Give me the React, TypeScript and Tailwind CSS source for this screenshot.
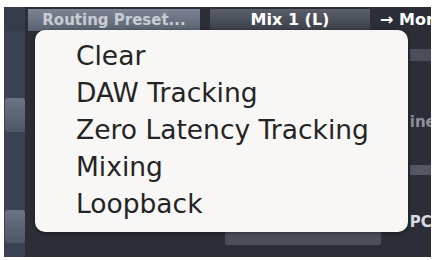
const ITEMS = ['Clear', 'DAW Tracking', 'Zero Latency Tracking', 'Mixing', 'Loopback'];

export default function App() {
  return (
    <div className="w-[434px] h-[260px] bg-white pt-[7px] pl-[4px]" style={{ fontFamily: '"DejaVu Sans", Verdana, sans-serif' }}>
      <div className="relative w-[427px] h-[250px] bg-[#2b2e36] flex overflow-hidden">
        {/* left strip with knobs */}
        <div className="w-[31px] h-full bg-[#3a4252] flex flex-col">
          <div className="h-[24px] bg-[#353c4a]" />
          <div className="mt-[67px] ml-[1px] w-[20px] h-[34px] rounded-[3px] bg-gradient-to-b from-[#6b7382] to-[#4f5664]" />
          <div className="mt-[78px] ml-[1px] w-[20px] h-[33px] rounded-[3px] bg-gradient-to-b from-[#6b7382] to-[#4f5664]" />
        </div>

        <div className="flex-1 flex flex-col">
          {/* top row */}
          <div className="h-[24px] flex items-start pt-[2px] gap-[10px] pl-[3px]">
            <div className="w-[172px] h-[22px] bg-gradient-to-b from-[#7d8595] to-[#5a6272] flex items-center justify-center text-[15px] font-bold text-[#c9ccd2] whitespace-nowrap">
              Routing Preset...
            </div>
            <div className="w-[160px] h-[22px] bg-gradient-to-b from-[#5a5f69] to-[#3b3f47] flex items-center justify-center text-[16px] font-bold text-white whitespace-nowrap">
              Mix 1 (L)
            </div>
            <div className="text-[16px] font-bold text-white leading-[22px] whitespace-nowrap">→ Mor</div>
          </div>
          <div className="flex-1 flex">
            <div className="flex-1" />
            <div className="w-[24px] flex flex-col">
              <div className="h-[12px] mt-[18px] bg-[#4a4e58]" />
              <div className="h-[46px] mt-[38px] flex items-center text-[15px] text-[#8c9098] font-bold">ine</div>
              <div className="h-[10px] mt-[20px] bg-[#545864]" />
              <div className="h-[24px] mt-[35px] flex items-center text-[15px] text-[#d9dbe0] font-bold">PC</div>
            </div>
          </div>
        </div>

        {/* bar under menu */}
        <div className="absolute left-[221px] top-[224px] w-[156px] h-[14px] bg-[#4b4f58] rounded-b-[2px]" />

        {/* popup menu */}
        <div className="absolute left-[31px] top-[23px] w-[373px] h-[202px] rounded-[10px] bg-[#f8f7f5] shadow-[0_1px_4px_rgba(0,0,0,0.45)] pt-[8px] pl-[41px]">
          {ITEMS.map((item) => (
            <div key={item} className="h-[37px] flex items-center text-[26.5px] text-[#242424] leading-none">
              {item}
            </div>
          ))}
        </div>
      </div>
    </div>
  );
}
